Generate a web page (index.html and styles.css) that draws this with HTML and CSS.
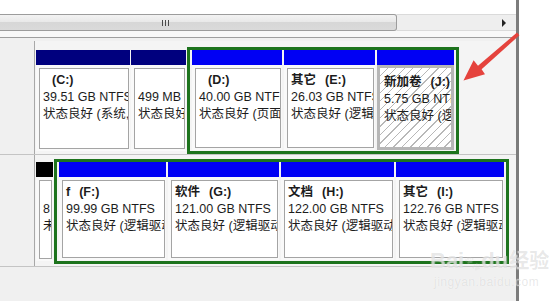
FILE: index.html
```html
<!DOCTYPE html>
<html lang="zh-CN">
<head>
    <meta charset="UTF-8">
    <title>磁盘管理</title>
    <link rel="stylesheet" href="styles.css">
</head>
<body>
    <div class="window">
        <div class="top-space"></div>
        <div class="hscroll">
            <div class="thumb"><span class="grip"></span></div>
            <div class="track"></div>
            <div class="arrow"><span class="tri"></span></div>
        </div>
        <div class="scroll-gap"></div>

        <div class="disks">
            <!-- 磁盘 0 -->
            <div class="disk-row row-1">
                <div class="disk-label"></div>
                <div class="parts">
                    <div class="slot">
                        <div class="part primary w-c">
                            <div class="bar"></div>
                            <div class="body">
                                <div class="info">
                                    <div class="name"><b class="letter">(C:)</b></div>
                                    <div>39.51 GB NTFS</div>
                                    <div>状态良好 (系统, 启动, 页面文件, 活动, 故障转储, 主分区)</div>
                                </div>
                            </div>
                        </div>
                    </div>
                    <div class="slot">
                        <div class="part primary w-sys">
                            <div class="bar"></div>
                            <div class="body">
                                <div class="info">
                                    <div class="name">&nbsp;</div>
                                    <div>499 MB NTFS</div>
                                    <div>状态良好 (主分区)</div>
                                </div>
                            </div>
                        </div>
                    </div>
                    <div class="group">
                        <div class="part logical w-d">
                            <div class="bar"></div>
                            <div class="body">
                                <div class="info">
                                    <div class="name"><b class="letter">(D:)</b></div>
                                    <div>40.00 GB NTFS</div>
                                    <div>状态良好 (页面文件, 逻辑驱动器)</div>
                                </div>
                            </div>
                        </div>
                        <div class="part logical w-e">
                            <div class="bar"></div>
                            <div class="body">
                                <div class="info">
                                    <div class="name"><b>其它</b><b class="letter">(E:)</b></div>
                                    <div>26.03 GB NTFS</div>
                                    <div>状态良好 (逻辑驱动器)</div>
                                </div>
                            </div>
                        </div>
                        <div class="part logical w-j selected">
                            <div class="bar"></div>
                            <div class="body">
                                <div class="info">
                                    <div class="name"><b>新加卷</b><b class="letter">(J:)</b></div>
                                    <div>5.75 GB NTFS</div>
                                    <div>状态良好 (逻辑驱动器)</div>
                                </div>
                            </div>
                        </div>
                    </div>
                </div>
            </div>

            <!-- 磁盘 1 -->
            <div class="disk-row row-2">
                <div class="disk-label"></div>
                <div class="parts">
                    <div class="slot">
                        <div class="part free w-free">
                            <div class="bar"></div>
                            <div class="body">
                                <div class="info">
                                    <div class="name">&nbsp;</div>
                                    <div>8 MB</div>
                                    <div>未分配</div>
                                </div>
                            </div>
                        </div>
                    </div>
                    <div class="group">
                        <div class="part logical w-f">
                            <div class="bar"></div>
                            <div class="body">
                                <div class="info">
                                    <div class="name"><b>f</b><b class="letter">(F:)</b></div>
                                    <div>99.99 GB NTFS</div>
                                    <div>状态良好 (逻辑驱动器)</div>
                                </div>
                            </div>
                        </div>
                        <div class="part logical w-g">
                            <div class="bar"></div>
                            <div class="body">
                                <div class="info">
                                    <div class="name"><b>软件</b><b class="letter">(G:)</b></div>
                                    <div>121.00 GB NTFS</div>
                                    <div>状态良好 (逻辑驱动器)</div>
                                </div>
                            </div>
                        </div>
                        <div class="part logical w-h">
                            <div class="bar"></div>
                            <div class="body">
                                <div class="info">
                                    <div class="name"><b>文档</b><b class="letter">(H:)</b></div>
                                    <div>122.00 GB NTFS</div>
                                    <div>状态良好 (逻辑驱动器)</div>
                                </div>
                            </div>
                        </div>
                        <div class="part logical w-i">
                            <div class="bar"></div>
                            <div class="body">
                                <div class="info">
                                    <div class="name"><b>其它</b><b class="letter">(I:)</b></div>
                                    <div>122.76 GB NTFS</div>
                                    <div>状态良好 (逻辑驱动器)</div>
                                </div>
                            </div>
                        </div>
                    </div>
                </div>
            </div>
        </div>
    </div>

    <!-- red pointer drawn over the screenshot -->
    <svg class="pointer" width="560" height="301" viewBox="0 0 560 301">
        <polygon points="517,32.6 519.4,35.2 481.6,69.2 485,74.2 463.5,80.5 473.6,60.2 478,65.8" fill="#e5433d"/>
    </svg>

    <div class="watermark">
        <div class="wm-brand">Bai<span class="paw">&#x1F43E;</span>du<span class="wm-cn">经验</span></div>
        <div class="wm-url">jingyan.baidu.com</div>
    </div>
</body>
</html>
```

FILE: styles.css
```css
body {
    margin: 0;
    width: 560px;
    height: 301px;
    overflow: hidden;
    background: #fff;
    font-family: 'Liberation Sans', 'Noto Sans CJK SC', sans-serif;
    font-size: 12.5px;
    color: #1c1c1c;
}

.window {
    width: 516px;
    height: 301px;
    border-right: 3px solid #7c7c7c;
    background: #f0f0f0;
    display: flex;
    flex-direction: column;
}

.top-space {
    height: 14px;
    background: #fff;
}

/* horizontal scroll bar */
.hscroll {
    height: 17px;
    display: flex;
    background: #ececec;
}

.thumb {
    width: 397px;
    height: 17px;
    box-sizing: border-box;
    border: 1px solid #9c9c9c;
    border-left: none;
    border-radius: 0 3px 3px 0;
    background: linear-gradient(#f3f3f3, #e9e9e9 45%, #d7d7d7 50%, #dadada);
    display: flex;
    align-items: center;
    padding-left: 162px;
}

.grip {
    width: 7px;
    height: 6px;
    background: repeating-linear-gradient(90deg, #4a4a4a 0 1px, transparent 1px 3px);
}

.track {
    flex-grow: 1;
    border-top: 1px solid #dadada;
    border-bottom: 1px solid #dadada;
    background: #eeeeee;
}

.arrow {
    width: 18px;
    display: flex;
    align-items: center;
    padding-left: 4px;
    box-sizing: border-box;
    border-top: 1px solid #dadada;
    border-bottom: 1px solid #dadada;
    background: #eeeeee;
}

.tri {
    width: 0;
    height: 0;
    border-top: 4px solid transparent;
    border-bottom: 4px solid transparent;
    border-left: 4px solid #222;
}

.scroll-gap {
    height: 6px;
    background: #f8f8f8;
    border-bottom: 1px solid #9e9e9e;
}

/* disk rows */
.disks {
    padding-top: 3px;
}

.disk-row {
    display: flex;
    border-bottom: 1px solid #c4c4c4;
}

.row-1 {
    height: 113px;
}

.row-2 {
    height: 111px;
}

.disk-label {
    width: 34px;
    border-right: 1px solid #a8a8a8;
    background: #f0f0f0;
}

.parts {
    flex-grow: 1;
    display: flex;
    gap: 1px;
    padding-left: 1px;
    background: #f4f4f4;
}

.row-1 .parts {
    padding-top: 6px;
}

.row-2 .parts {
    padding-top: 4px;
    padding-bottom: 2px;
}

.slot {
    display: flex;
    padding-top: 3px;
    padding-bottom: 3px;
}

.group {
    display: flex;
    gap: 2px;
    border: 3px solid #1d731d;
    padding: 0 2px 1px;
}

.part {
    display: flex;
    flex-direction: column;
    background: #f9f9f9;
}

.bar {
    height: 15px;
    flex-shrink: 0;
}

.primary .bar {
    background: #00007e;
}

.logical .bar {
    background: #0000f4;
}

.free .bar {
    background: #000;
}

.body {
    flex-grow: 1;
    display: flex;
    padding: 3px 1px 2px 3px;
}

.info {
    flex-grow: 1;
    border: 1px solid #a4a4a4;
    background: #fff;
    padding: 3px 0 0 3px;
    line-height: 17px;
    white-space: nowrap;
    overflow: hidden;
}

.name b {
    font-weight: bold;
}

.letter {
    margin-left: 9px;
}

.selected .body {
    padding: 0;
}

.selected .info {
    border: 3px solid #b6b6b6;
    padding: 6px 0 0 4px;
    background: repeating-linear-gradient(135deg, #fff 0 5px, #b8b8b8 5px 6px);
}

/* partition widths */
.w-c { width: 94px; }
.w-sys { width: 55px; }
.w-d { width: 90px; }
.w-e { width: 91px; }
.w-j { width: 77px; }
.w-free { width: 17px; }
.w-f { width: 107px; }
.w-g { width: 111px; }
.w-h { width: 113px; }
.w-i { width: 108px; }

/* overlays */
.pointer {
    position: absolute;
    top: 0;
    left: 0;
}

.watermark {
    position: absolute;
    left: 430px;
    top: 248px;
    color: rgba(120, 120, 120, 0.18);
    text-shadow: 0 0 1px rgba(255, 255, 255, 0.8);
}

.wm-brand {
    font-family: 'Liberation Sans', sans-serif;
    font-weight: bold;
    font-size: 22px;
    line-height: 24px;
}

.paw {
    font-size: 14px;
    filter: grayscale(1) opacity(0.4);
}

.wm-cn {
    font-family: 'Noto Sans CJK SC', sans-serif;
    font-size: 20px;
    margin-left: 1px;
}

.wm-url {
    font-size: 12px;
    line-height: 14px;
    letter-spacing: 0.5px;
    margin-left: 4px;
}
```
